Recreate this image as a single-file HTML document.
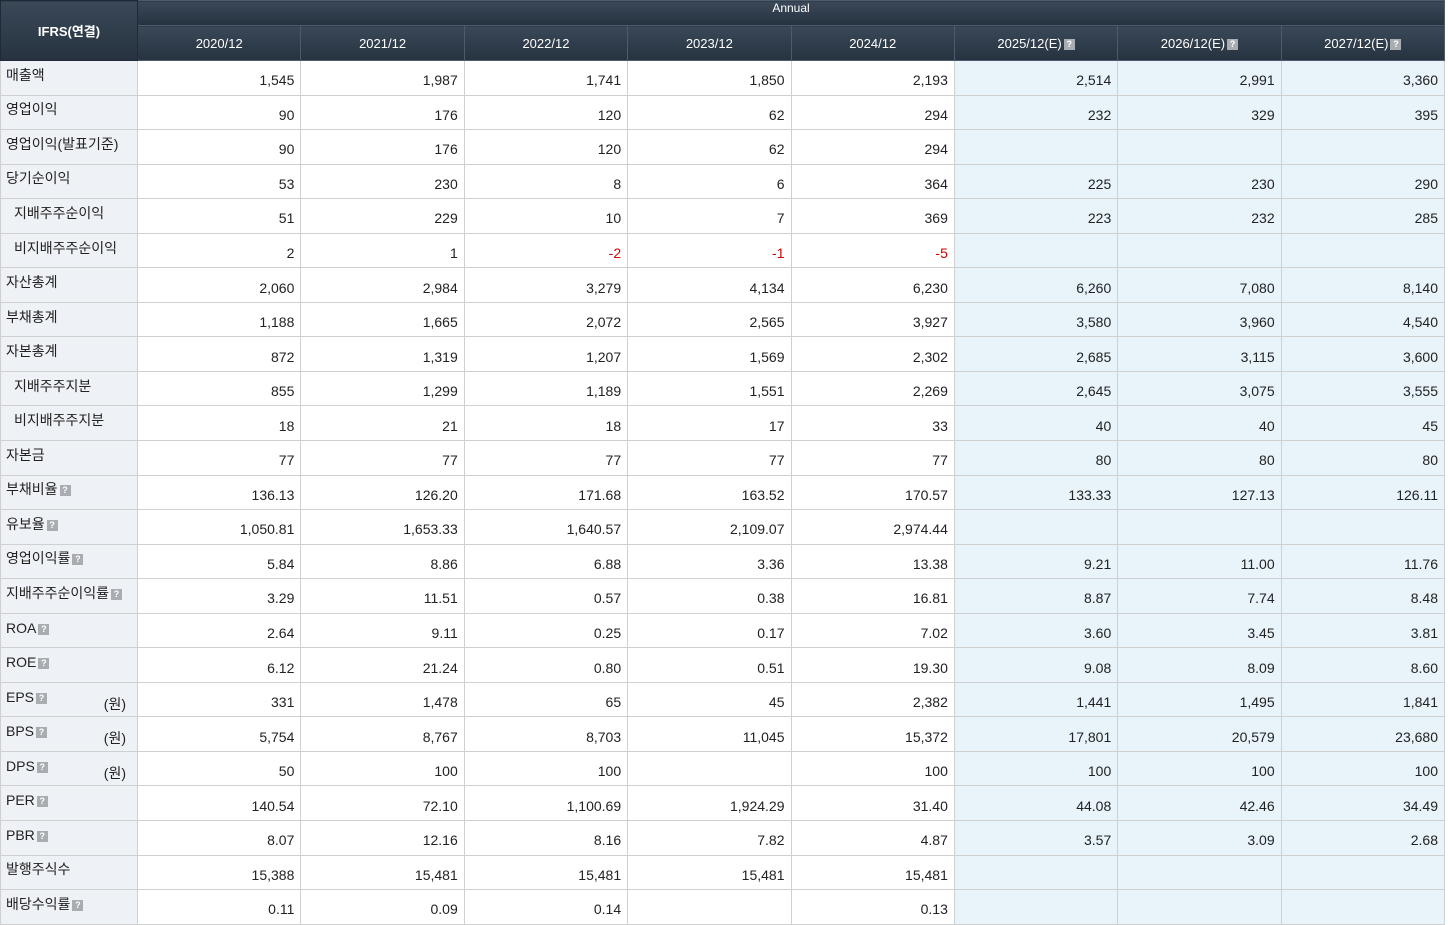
<!DOCTYPE html>
<html><head><meta charset="utf-8"><style>
body{margin:0;background:#fff;width:1448px;height:924px;overflow:hidden;font-family:"Liberation Sans","Noto Sans CJK KR",sans-serif;font-size:14px;color:#222}
table{border-collapse:collapse;table-layout:fixed;width:1444px}
th{background:linear-gradient(#3a4858,#26323f);color:#fff;font-weight:normal;border:1px solid #4d5b6b;font-size:13px}
th.f{font-weight:bold;font-size:13px;border-color:#1f2a36}
tr.d{height:34.56px}
td{border:1px solid #d0d0d0;height:34.56px;text-align:right;padding:5px 6px 0 4px;box-sizing:border-box;white-space:nowrap}
td.l{text-align:left;background:#eef1f5;padding:0 4px 6px 5px;position:relative}
td.l.i{padding-left:13px}
td.e{background:#e8f4fa}
.r{color:#d10000}
.q{display:inline-block;width:11px;height:11px;background:#a9adb2;color:#fff;font-size:9px;line-height:11px;text-align:center;vertical-align:1px;margin-left:2px;font-weight:bold}
.w{position:absolute;right:11px;top:11px}
</style></head><body>
<table>
<colgroup><col style="width:137px"><col span="8" style="width:163.375px"></colgroup>
<tr style="height:25px"><th class="f" rowspan="2">IFRS(연결)</th><th colspan="8" style="font-size:12px;vertical-align:top;padding-top:0">Annual</th></tr>
<tr style="height:35px"><th>2020/12</th><th>2021/12</th><th>2022/12</th><th>2023/12</th><th>2024/12</th><th>2025/12(E)<span class="q">?</span></th><th>2026/12(E)<span class="q">?</span></th><th>2027/12(E)<span class="q">?</span></th></tr>
<tr class="d"><td class="l">매출액</td><td>1,545</td><td>1,987</td><td>1,741</td><td>1,850</td><td>2,193</td><td class="e">2,514</td><td class="e">2,991</td><td class="e">3,360</td></tr>
<tr class="d"><td class="l">영업이익</td><td>90</td><td>176</td><td>120</td><td>62</td><td>294</td><td class="e">232</td><td class="e">329</td><td class="e">395</td></tr>
<tr class="d"><td class="l">영업이익(발표기준)</td><td>90</td><td>176</td><td>120</td><td>62</td><td>294</td><td class="e"></td><td class="e"></td><td class="e"></td></tr>
<tr class="d"><td class="l">당기순이익</td><td>53</td><td>230</td><td>8</td><td>6</td><td>364</td><td class="e">225</td><td class="e">230</td><td class="e">290</td></tr>
<tr class="d"><td class="l i">지배주주순이익</td><td>51</td><td>229</td><td>10</td><td>7</td><td>369</td><td class="e">223</td><td class="e">232</td><td class="e">285</td></tr>
<tr class="d"><td class="l i">비지배주주순이익</td><td>2</td><td>1</td><td class="r">-2</td><td class="r">-1</td><td class="r">-5</td><td class="e"></td><td class="e"></td><td class="e"></td></tr>
<tr class="d"><td class="l">자산총계</td><td>2,060</td><td>2,984</td><td>3,279</td><td>4,134</td><td>6,230</td><td class="e">6,260</td><td class="e">7,080</td><td class="e">8,140</td></tr>
<tr class="d"><td class="l">부채총계</td><td>1,188</td><td>1,665</td><td>2,072</td><td>2,565</td><td>3,927</td><td class="e">3,580</td><td class="e">3,960</td><td class="e">4,540</td></tr>
<tr class="d"><td class="l">자본총계</td><td>872</td><td>1,319</td><td>1,207</td><td>1,569</td><td>2,302</td><td class="e">2,685</td><td class="e">3,115</td><td class="e">3,600</td></tr>
<tr class="d"><td class="l i">지배주주지분</td><td>855</td><td>1,299</td><td>1,189</td><td>1,551</td><td>2,269</td><td class="e">2,645</td><td class="e">3,075</td><td class="e">3,555</td></tr>
<tr class="d"><td class="l i">비지배주주지분</td><td>18</td><td>21</td><td>18</td><td>17</td><td>33</td><td class="e">40</td><td class="e">40</td><td class="e">45</td></tr>
<tr class="d"><td class="l">자본금</td><td>77</td><td>77</td><td>77</td><td>77</td><td>77</td><td class="e">80</td><td class="e">80</td><td class="e">80</td></tr>
<tr class="d"><td class="l">부채비율<span class="q">?</span></td><td>136.13</td><td>126.20</td><td>171.68</td><td>163.52</td><td>170.57</td><td class="e">133.33</td><td class="e">127.13</td><td class="e">126.11</td></tr>
<tr class="d"><td class="l">유보율<span class="q">?</span></td><td>1,050.81</td><td>1,653.33</td><td>1,640.57</td><td>2,109.07</td><td>2,974.44</td><td class="e"></td><td class="e"></td><td class="e"></td></tr>
<tr class="d"><td class="l">영업이익률<span class="q">?</span></td><td>5.84</td><td>8.86</td><td>6.88</td><td>3.36</td><td>13.38</td><td class="e">9.21</td><td class="e">11.00</td><td class="e">11.76</td></tr>
<tr class="d"><td class="l">지배주주순이익률<span class="q">?</span></td><td>3.29</td><td>11.51</td><td>0.57</td><td>0.38</td><td>16.81</td><td class="e">8.87</td><td class="e">7.74</td><td class="e">8.48</td></tr>
<tr class="d"><td class="l">ROA<span class="q">?</span></td><td>2.64</td><td>9.11</td><td>0.25</td><td>0.17</td><td>7.02</td><td class="e">3.60</td><td class="e">3.45</td><td class="e">3.81</td></tr>
<tr class="d"><td class="l">ROE<span class="q">?</span></td><td>6.12</td><td>21.24</td><td>0.80</td><td>0.51</td><td>19.30</td><td class="e">9.08</td><td class="e">8.09</td><td class="e">8.60</td></tr>
<tr class="d"><td class="l">EPS<span class="q">?</span><span class="w">(원)</span></td><td>331</td><td>1,478</td><td>65</td><td>45</td><td>2,382</td><td class="e">1,441</td><td class="e">1,495</td><td class="e">1,841</td></tr>
<tr class="d"><td class="l">BPS<span class="q">?</span><span class="w">(원)</span></td><td>5,754</td><td>8,767</td><td>8,703</td><td>11,045</td><td>15,372</td><td class="e">17,801</td><td class="e">20,579</td><td class="e">23,680</td></tr>
<tr class="d"><td class="l">DPS<span class="q">?</span><span class="w">(원)</span></td><td>50</td><td>100</td><td>100</td><td></td><td>100</td><td class="e">100</td><td class="e">100</td><td class="e">100</td></tr>
<tr class="d"><td class="l">PER<span class="q">?</span></td><td>140.54</td><td>72.10</td><td>1,100.69</td><td>1,924.29</td><td>31.40</td><td class="e">44.08</td><td class="e">42.46</td><td class="e">34.49</td></tr>
<tr class="d"><td class="l">PBR<span class="q">?</span></td><td>8.07</td><td>12.16</td><td>8.16</td><td>7.82</td><td>4.87</td><td class="e">3.57</td><td class="e">3.09</td><td class="e">2.68</td></tr>
<tr class="d"><td class="l">발행주식수</td><td>15,388</td><td>15,481</td><td>15,481</td><td>15,481</td><td>15,481</td><td class="e"></td><td class="e"></td><td class="e"></td></tr>
<tr class="d"><td class="l">배당수익률<span class="q">?</span></td><td>0.11</td><td>0.09</td><td>0.14</td><td></td><td>0.13</td><td class="e"></td><td class="e"></td><td class="e"></td></tr>
</table>
</body></html>
